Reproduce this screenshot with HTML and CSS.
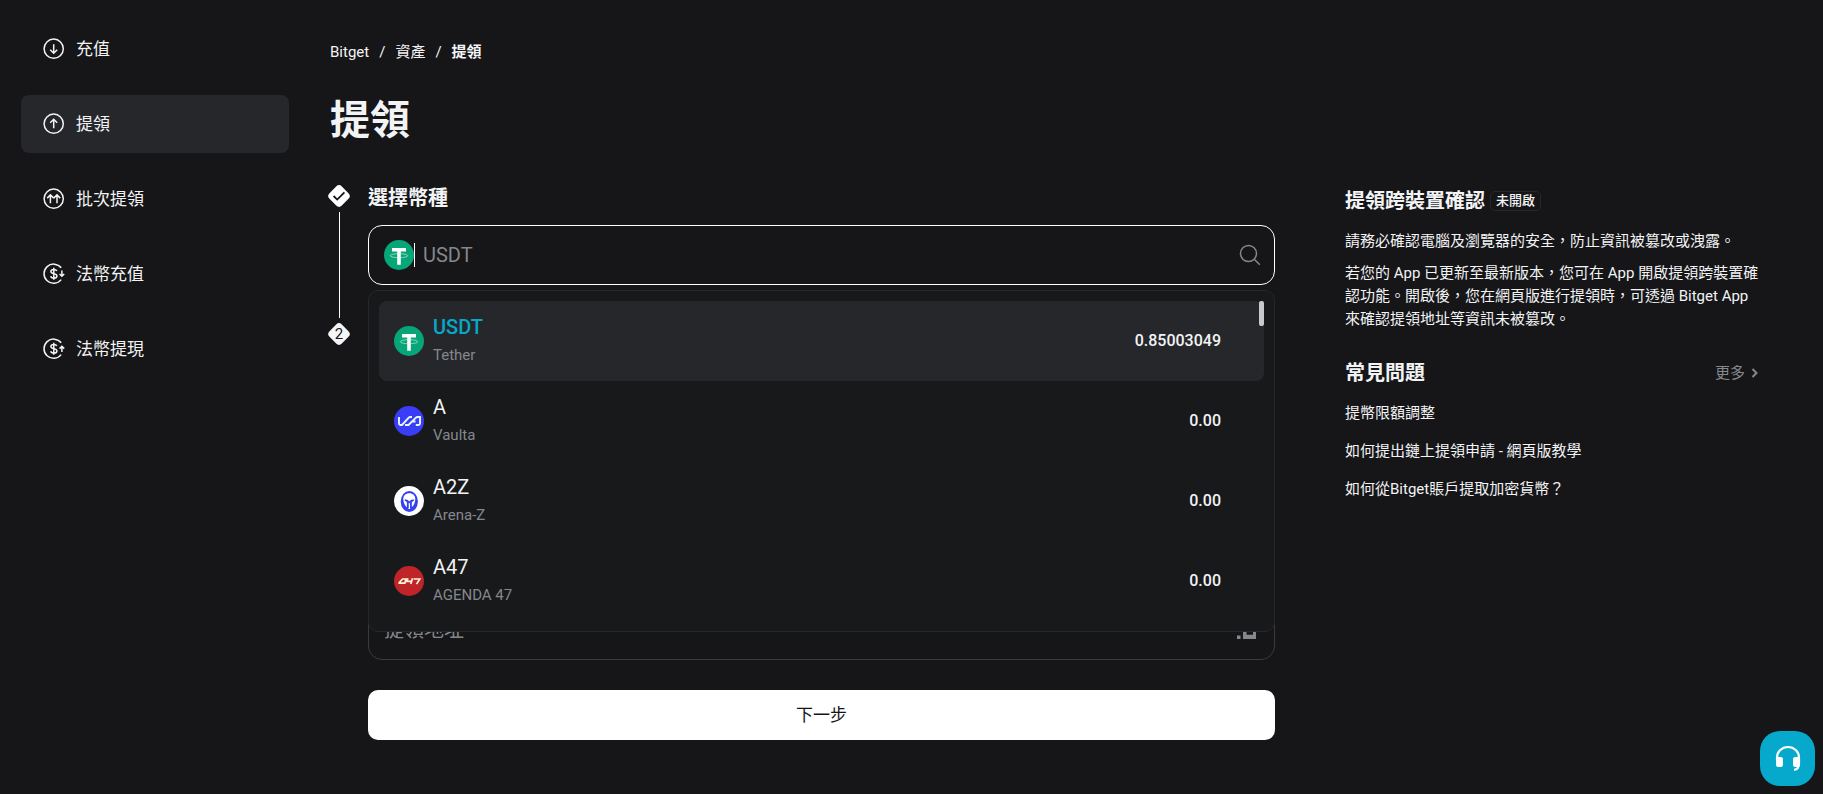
FILE: index.html
```html
<!DOCTYPE html>
<html lang="zh-Hant">
<head>
<meta charset="utf-8">
<meta name="viewport" content="width=device-width, initial-scale=1">
<title>提領 | Bitget</title>
<link rel="stylesheet" href="styles.css">
</head>
<body>
<svg class="defs" aria-hidden="true">
  <symbol id="tether" viewBox="0 0 30 30">
    <circle cx="15" cy="15" r="15" fill="#06a679"/>
    <path d="M8 8h14v3.500h-5.200v13.200h-3.600V11.500H8z" fill="#fff"/>
    <ellipse cx="15" cy="15.700" rx="8.800" ry="2" fill="none" stroke="#d9f3ea" stroke-width=".6"/>
  </symbol>
</svg>
<div class="page">
  <nav class="side" aria-label="資產">
    <a class="side-item" href="#"><svg viewBox="0 0 22 22"><circle cx="10.700" cy="10.700" r="9.600"/><path d="M10.700 6.200v9M7.200 11.700l3.500 3.500 3.500-3.500"/></svg>充值</a>
    <a class="side-item active" href="#" aria-current="page"><svg viewBox="0 0 22 22"><circle cx="10.700" cy="10.700" r="9.600"/><path d="M10.700 15.200v-9M7.200 9.700l3.500-3.500 3.500 3.500"/></svg>提領</a>
    <a class="side-item" href="#"><svg viewBox="0 0 22 22"><circle cx="10.700" cy="10.700" r="9.600"/><path d="M7.400 15.200V6.900M4.200 10.100l3.200-3.200 3.300 3.200M14 15.200V6.900M10.700 10.100L14 6.900l3.200 3.200"/></svg>批次提領</a>
    <a class="side-item" href="#"><svg viewBox="0 0 22 22"><path d="M18.200 4.800A9.600 9.600 0 1 0 18.200 16.600"/><path d="M13.800 8c-.4-1-1.500-1.500-3-1.500-1.800 0-2.900.8-2.900 2.100 0 3 6 1.300 6 4.300 0 1.400-1.200 2.200-3 2.200-1.700 0-2.900-.7-3.200-1.800M10.800 4.800v12M18.900 7.600v5.600M16.600 11l2.300 2.300 2.300-2.300"/></svg>法幣充值</a>
    <a class="side-item" href="#"><svg viewBox="0 0 22 22"><path d="M18.200 4.800A9.600 9.600 0 1 0 18.200 16.600"/><path d="M13.800 8c-.4-1-1.500-1.500-3-1.500-1.800 0-2.900.8-2.900 2.100 0 3 6 1.300 6 4.300 0 1.400-1.200 2.200-3 2.200-1.700 0-2.900-.7-3.200-1.800M10.800 4.800v12M18.900 14V8.400M16.600 10.600l2.300-2.300 2.300 2.300"/></svg>法幣提現</a>
  </nav>

  <main class="main">
    <nav class="crumbs" aria-label="路徑"><a href="#">Bitget</a><span>/</span><a href="#">資產</a><span>/</span><strong>提領</strong></nav>
    <h1>提領</h1>

    <div class="columns">
      <form class="steps">
        <section class="step step-coin">
          <div class="rail">
            <svg class="diamond" viewBox="0 0 24 24"><rect x="3.300" y="3.300" width="17.400" height="17.400" rx="4" fill="#fff" transform="rotate(45 12 12)"/><path d="M6.600 12l3.600 3.600L17.400 8.400" fill="none" stroke="#161618" stroke-width="1.800"/></svg>
            <i class="rail-line"></i>
          </div>
          <div class="step-body">
            <h2><label for="coin">選擇幣種</label></h2>
            <div class="picker">
              <div class="field field-active">
                <svg class="coin"><use href="#tether"/></svg>
                <i class="caret"></i>
                <input id="coin" type="text" placeholder="USDT">
                <svg class="search" viewBox="0 0 22 22"><circle cx="9.500" cy="9.500" r="8"/><path d="M15.300 15.300l5.500 5.500"/></svg>
              </div>
              <div class="menu" role="listbox" aria-label="選擇幣種">
                <button type="button" class="option selected" role="option" aria-selected="true">
                  <svg class="coin"><use href="#tether"/></svg>
                  <span class="names"><b>USDT</b><small>Tether</small></span><span class="amount">0.85003049</span>
                </button>
                <button type="button" class="option" role="option">
                  <svg class="coin" viewBox="0 0 30 30"><circle cx="15" cy="15" r="15" fill="#3a3df5"/><path d="M5 11v6.500q0 1.500 1.500 1.500H8l6.500-7.200q.8-.8 2-.8H18M11 19h3.500l7.200-7.200q.8-.8 2-.8H26v6.500q0 1.500-1.500 1.500h-2.700M17.500 15.500l4 0" fill="none" stroke="#e4f6fb" stroke-width="1.900"/></svg>
                  <span class="names"><b>A</b><small>Vaulta</small></span><span class="amount">0.00</span>
                </button>
                <button type="button" class="option" role="option">
                  <svg class="coin" viewBox="0 0 30 30"><circle cx="15" cy="15" r="15" fill="#fff"/><ellipse cx="15.300" cy="15.500" rx="8.600" ry="10.500" fill="#3540ee"/><path d="M15.300 7.300c-3.600 0-6 2.300-6 5.600 0 3.400 1.500 6.600 3.600 8.400v-5.100l-3-2.400c2 .1 3.800.8 4.600 2.300v7h1.600v-7c.8-1.500 2.600-2.200 4.600-2.300l-3 2.400v5.100c2.100-1.800 3.600-5 3.600-8.400 0-3.300-2.400-5.600-6-5.600z" fill="#fff"/><path d="M11 13.800c2 .2 3.200.9 4.300 2.500 1.100-1.600 2.300-2.300 4.300-2.500M13.800 16v6M16.800 16v6" fill="none" stroke="#3540ee" stroke-width="1.300"/></svg>
                  <span class="names"><b>A2Z</b><small>Arena-Z</small></span><span class="amount">0.00</span>
                </button>
                <button type="button" class="option" role="option">
                  <svg class="coin" viewBox="0 0 30 30"><circle cx="15" cy="15" r="15" fill="#bf2429"/><path d="M4.400 17.200h6.400l1.200-4.200H8.600l-3.400 3.700M13.900 12.300l-.9 3h4.500M18.500 12.300l-1.700 5.800M19.600 13h6.200l-3.300 5.100" fill="none" stroke="#fdf3d8" stroke-width="1.700"/></svg>
                  <span class="names"><b>A47</b><small>AGENDA 47</small></span><span class="amount">0.00</span>
                </button>
                <i class="thumb"></i>
              </div>
            </div>
          </div>
        </section>

        <section class="step step-address">
          <div class="rail">
            <span class="num-diamond"><svg class="diamond" viewBox="0 0 24 24"><rect x="3.300" y="3.300" width="17.400" height="17.400" rx="4" fill="#f4f5f6" transform="rotate(45 12 12)"/></svg><span>2</span></span>
          </div>
          <div class="step-body">
            <div class="field">
              <input id="address" type="text" placeholder="提領地址" aria-label="提領地址">
              <svg class="book" viewBox="0 0 20 20"><path d="M0 15.500h3.500V19H0zM6 11v8h13v-8h-3v3.700H9.500V11z"/></svg>
            </div>
            <button type="submit" class="next">下一步</button>
          </div>
        </section>
      </form>

      <aside class="info">
        <h2>提領跨裝置確認<span class="tag">未開啟</span></h2>
        <p>請務必確認電腦及瀏覽器的安全，防止資訊被篡改或洩露。</p>
        <p>若您的 App 已更新至最新版本，您可在 App 開啟提領跨裝置確認功能。開啟後，您在網頁版進行提領時，可透過 Bitget App 來確認提領地址等資訊未被篡改。</p>
        <div class="faq-head">
          <h2>常見問題</h2>
          <a class="more" href="#">更多<svg viewBox="0 0 8 10"><path d="M1.500 1l4 4-4 4"/></svg></a>
        </div>
        <ul class="faq">
          <li><a href="#">提幣限額調整</a></li>
          <li><a href="#">如何提出鏈上提領申請 - 網頁版教學</a></li>
          <li><a href="#">如何從Bitget賬戶提取加密貨幣？</a></li>
        </ul>
      </aside>
    </div>
  </main>
</div>
<button class="support" type="button" aria-label="客服"><svg viewBox="0 0 28 28"><path d="M3 15v-2.500a11 10.500 0 0 1 22 0V18c0 4.500-1.500 6.600-5 6.800" fill="none" stroke="#fff" stroke-width="2.200"/><rect x="2" y="12" width="7" height="10" rx="2.200" fill="#fff"/><rect x="19" y="12" width="7" height="10" rx="2.200" fill="#fff"/></svg></button>
</body>
</html>
```
FILE: styles.css
```css
* { box-sizing: border-box; }
body {
  margin: 0;
  min-height: 100vh;
  background: #161618;
  color: #f2f3f5;
  font-family: Roboto, "Noto Sans CJK TC", sans-serif;
  font-size: 15px;
  line-height: 22px;
}
a { color: inherit; text-decoration: none; }
button, input { font: inherit; color: inherit; }
h1, h2, p, ul { margin: 0; padding: 0; }
h2 { font-size: 20px; line-height: 28px; font-weight: 700; }
svg { flex: none; display: block; }
.defs { position: absolute; width: 0; height: 0; }

.page {
  display: grid;
  grid-template-columns: 268px minmax(0, 1fr);
  column-gap: 39px;
  padding: 20px 64px 0 21px;
}

.side { display: flex; flex-direction: column; gap: 17px; }
.side-item {
  display: flex;
  align-items: center;
  gap: 11px;
  height: 58px;
  padding-left: 22px;
  border-radius: 8px;
  font-size: 17px;
}
.side-item.active { background: #26272b; }
.side-item svg { width: 22px; height: 22px; fill: none; stroke: #f2f3f5; stroke-width: 1.5; }

.crumbs { display: flex; gap: 10px; padding: 21px 0 0 2px; }
h1 { padding: 29px 0 0 2px; font-size: 40px; line-height: 58px; font-weight: 700; }

.columns {
  display: grid;
  grid-template-columns: minmax(0, 1fr) 414px;
  column-gap: 70px;
  padding-top: 34px;
}

.step { display: grid; grid-template-columns: 22px minmax(0, 1fr); column-gap: 18px; }
.step-coin { height: 138px; }
.rail { display: flex; flex-direction: column; align-items: center; }
.diamond { width: 24px; height: 24px; }
.rail-line { width: 1px; height: 106px; margin-top: 4px; background: #fff; }
.num-diamond { position: relative; }
.num-diamond span { position: absolute; inset: 0; color: #161618; text-align: center; line-height: 24px; }

.picker { position: relative; margin-top: 13px; }
.field {
  display: flex;
  align-items: center;
  height: 60px;
  padding: 0 15px;
  border: 1px solid #3a3b3e;
  border-radius: 14px;
}
.field-active { border-color: #fff; padding-right: 13px; }
.field input {
  flex: 1;
  min-width: 0;
  height: 40px;
  padding: 0;
  border: 0;
  outline: 0;
  background: transparent;
  font-size: 20px;
}
.field input::placeholder { color: #84888c; opacity: 1; }
.caret { width: 1px; height: 24px; margin-right: 8px; background: #fff; }
.coin { width: 30px; height: 30px; }
.search { width: 22px; height: 22px; fill: none; stroke: #84888c; stroke-width: 1.5; }
.book { width: 20px; height: 20px; fill: #84888c; }

.menu {
  position: absolute;
  z-index: 2;
  top: 65px;
  left: 0;
  right: 0;
  padding: 10px;
  border: 1px solid #26272b;
  border-radius: 10px;
  background: #18191b;
}
.option {
  display: flex;
  align-items: center;
  width: 100%;
  height: 80px;
  padding: 0 43px 0 15px;
  border: 0;
  border-radius: 8px;
  background: transparent;
  text-align: left;
}
.option.selected { background: #26272b; }
.names { display: flex; flex: 1; flex-direction: column; margin-left: 9px; line-height: 28px; }
.names b { font-size: 20px; font-weight: 400; }
.names small { font-size: 15px; color: #84888c; }
.option.selected b { color: #06a9cb; font-weight: 500; }
.amount { font-size: 16px; font-weight: 500; }
.thumb { position: absolute; top: 10px; right: 10px; width: 5px; height: 25px; border-radius: 2px; background: #c8c9cb; }

.step-address .field { margin-top: 278px; padding-right: 17px; }
.next {
  width: 100%;
  height: 50px;
  margin-top: 30px;
  border: 0;
  border-radius: 10px;
  background: #fff;
  color: #161618;
  font-size: 17px;
}

.info h2 { display: flex; align-items: center; gap: 5px; }
.info > h2 { padding-top: 3px; }
.tag {
  padding: 0 5px;
  border: 1px solid #26282b;
  border-radius: 5px;
  font-size: 13px;
  line-height: 18px;
  font-weight: 500;
}
.info p { margin-top: 9px; line-height: 23px; }
.info h2 + p { margin-top: 15px; }
.faq-head { display: flex; align-items: center; justify-content: space-between; margin-top: 28px; }
.more { display: flex; align-items: center; gap: 6px; color: #84888c; }
.more svg { width: 8px; height: 10px; fill: none; stroke: currentColor; stroke-width: 2; }
.faq { display: flex; flex-direction: column; gap: 16px; margin-top: 15px; list-style: none; }

.support {
  position: fixed;
  right: 8px;
  bottom: 8px;
  display: grid;
  place-items: center;
  width: 55px;
  height: 55px;
  padding: 0;
  border: 0;
  border-radius: 20px;
  background: #06a9cb;
}
.support svg { width: 28px; height: 28px; }
```
